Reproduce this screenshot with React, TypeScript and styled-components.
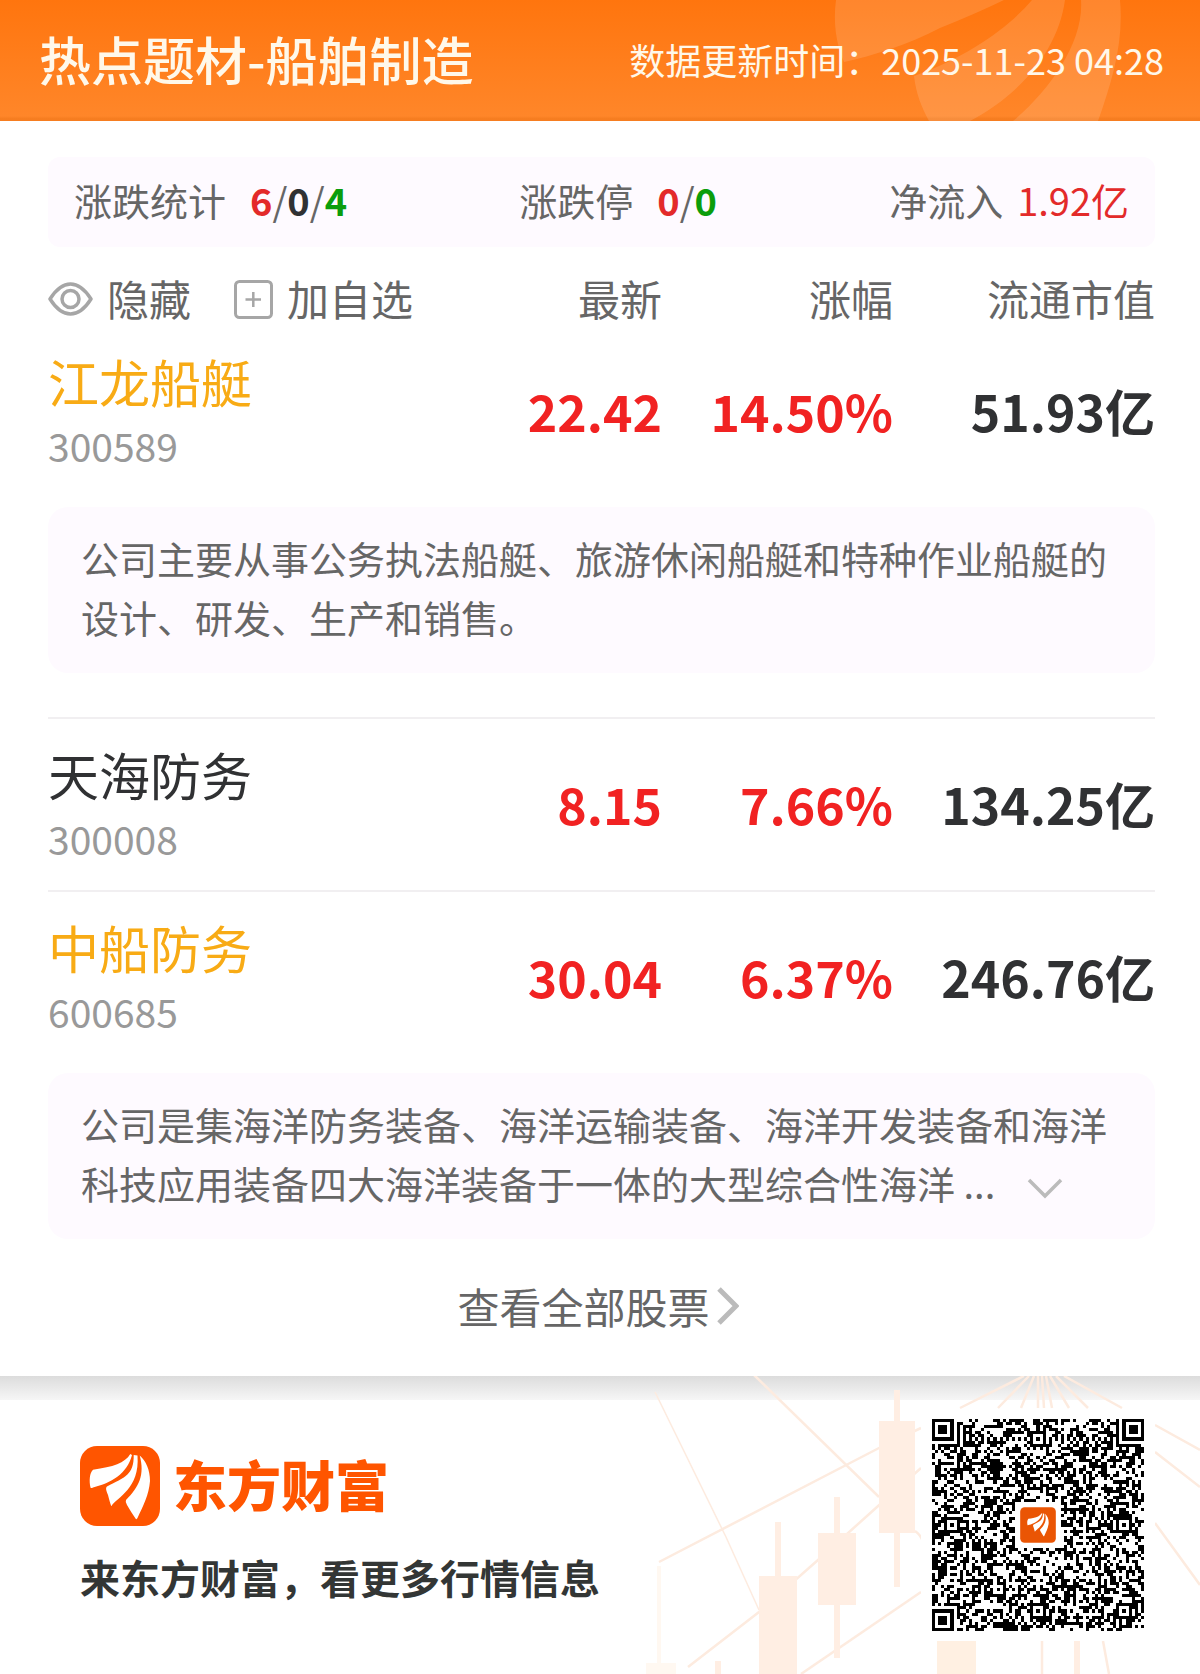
import React, { useState } from "react";
import styled, { createGlobalStyle } from "styled-components";

const GlobalStyle = createGlobalStyle`
  *, *::before, *::after { box-sizing: border-box; }
  body {
    margin: 0;
    background: #fff;
    color: #303133;
    font-family: "Noto Sans CJK SC", "Noto Sans", sans-serif;
  }
  button, table { font: inherit; }
  h1, p { margin: 0; }
`;

const RED = "#f12222";
const GREEN = "#0b9d0b";
const BRAND = "#ff5500";

/* ---------- Header ---------- */

const Header = styled.header`
  position: relative;
  display: flex;
  align-items: center;
  justify-content: space-between;
  gap: 24px;
  height: 121px;
  padding: 0 36px 4px 39px;
  overflow: hidden;
  background: linear-gradient(#ff750e, #ff8629 96%, #f67d20 98%);
  color: #fff8ea;
`;

const HeaderMark = styled.svg`
  position: absolute;
  top: 0;
  right: 0;
  width: 390px;
  height: 121px;
`;

const Title = styled.h1`
  position: relative;
  font-size: 52px;
  line-height: 64px;
  font-weight: 500;
  white-space: nowrap;
`;

const Updated = styled.p`
  position: relative;
  font-size: 36px;
  line-height: 48px;
  white-space: nowrap;
`;

/* ---------- Summary strip ---------- */

const Main = styled.main`
  padding: 36px 45px 0 48px;
`;

const Summary = styled.section`
  display: flex;
  align-items: center;
  justify-content: space-between;
  height: 90px;
  padding: 0 26px 4px;
  border-radius: 12px;
  background: #fefaff;
`;

const Stat = styled.p<{ $gap: number }>`
  display: flex;
  gap: ${(p) => p.$gap}px;
  font-size: 38px;
  line-height: 56px;
  color: #666;
  white-space: nowrap;
`;

const Count = styled.b<{ $color: string }>`
  font-weight: 700;
  color: ${(p) => p.$color};
`;

const Inflow = styled.span`
  color: #e32a2a;
`;

/* ---------- Stock table ---------- */

const Table = styled.table`
  width: 100%;
  table-layout: fixed;
  border-collapse: separate;
  border-spacing: 0;
`;

const Col = styled.col<{ $width?: number }>`
  width: ${(p) => (p.$width ? `${p.$width}px` : "auto")};
`;

const HeadCell = styled.th`
  height: 78px;
  padding: 23px 0 0;
  font-size: 42px;
  line-height: 55px;
  font-weight: 400;
  color: #666;
  text-align: right;
  vertical-align: top;
  white-space: nowrap;
`;

const Tools = styled.div`
  display: flex;
  align-items: center;
  gap: 43px;
`;

const ToolButton = styled.button`
  display: flex;
  align-items: center;
  gap: 14px;
  padding: 0;
  border: 0;
  background: none;
  color: #666;
  line-height: 55px;
  white-space: nowrap;
  cursor: pointer;

  svg {
    flex: none;
    margin-top: 3px;
  }
`;

const NameCell = styled.th<{ $ruled: boolean }>`
  height: ${(p) => (p.$ruled ? 173 : 172)}px;
  padding: ${(p) => (p.$ruled ? 23 : 24)}px 0 16px;
  border-top: ${(p) => (p.$ruled ? "2px solid #f1eff1" : "0")};
  text-align: left;
  vertical-align: top;
  font-weight: 400;
`;

const StockName = styled.div<{ $held: boolean }>`
  font-size: 51px;
  line-height: 64px;
  color: ${(p) => (p.$held ? "#f8ab15" : "#303133")};
`;

const StockCode = styled.div`
  font-size: 39px;
  line-height: 64px;
  color: #999;
`;

const NumberCell = styled.td<{ $ruled: boolean; $color: string }>`
  padding: 0 0 3px;
  border-top: ${(p) => (p.$ruled ? "2px solid #f1eff1" : "0")};
  font-size: 50px;
  line-height: 64px;
  font-weight: 700;
  text-align: right;
  vertical-align: middle;
  color: ${(p) => p.$color};
  white-space: nowrap;
`;

const NoteCell = styled.td<{ $last: boolean }>`
  padding: 10px 0 ${(p) => (p.$last ? 34 : 44)}px;
`;

const Note = styled.div`
  padding: 21px 32px 27px 33px;
  border-radius: 20px;
  background: #fefaff;
  font-size: 38px;
  line-height: 59px;
  color: #666;
`;

const MoreButton = styled.button`
  margin-left: 32px;
  padding: 0;
  border: 0;
  background: none;
  line-height: 0;
  cursor: pointer;
`;

const AllLink = styled.a`
  display: flex;
  align-items: center;
  justify-content: center;
  gap: 7px;
  height: 103px;
  padding: 0 7px 37px 0;
  font-size: 42px;
  line-height: 64px;
  color: #666;
  text-decoration: none;
`;

/* ---------- Footer ---------- */

const Footer = styled.footer`
  position: relative;
  display: flex;
  justify-content: space-between;
  align-items: flex-start;
  height: 298px;
  padding: 33px 45px 0 80px;
  overflow: hidden;
  background: linear-gradient(#dcdcdc, #f6f6f6 24px, #fff 24px);
`;

const ChartBackdrop = styled.svg`
  position: absolute;
  top: 0;
  right: 0;
  width: 560px;
  height: 298px;
`;

const Brand = styled.div`
  position: relative;
  display: flex;
  flex-direction: column;
  gap: 23px;
  padding-top: 37px;
`;

const BrandRow = styled.div`
  display: flex;
  align-items: center;
  gap: 13px;
  height: 80px;
`;

const WordMark = styled.span`
  padding-bottom: 4px;
  font-size: 54px;
  line-height: 64px;
  font-weight: 900;
  color: ${BRAND};
`;

const Slogan = styled.p`
  font-size: 40px;
  line-height: 56px;
  font-weight: 700;
  color: #333635;
`;

const QrCard = styled.div`
  position: relative;
  padding: 10px 11px;
  background: #fff;
  line-height: 0;
`;

/* ---------- Drawings ---------- */

const Petals = () => (
  <>
    <path d="M50.3 8C45 17 33 21 13 23.7C9.5 27 9 35 10.5 41.5Q11 42.5 13 41.5C31 37 47 28 52 9Z" />
    <path d="M53.7 9C54 29 45 31 27 40.5C25.500 42 26 44 28 49Q30 57 31.300 60.300C37 51 60 43 57.500 9.500Z" />
    <path d="M59.700 9.500C65 29 59 41 46 54Q45 56 47 59Q51 66 55.500 72.500Q56.500 74 57.500 72C63 60 69 49 70 35C70 24 66 15 59.700 9.500Z" />
  </>
);

const Logo = ({ size, color }: { size: number; color: string }) => (
  <svg width={size} height={size} viewBox="0 0 80 80" aria-hidden="true">
    <rect width="80" height="80" rx="17" fill={color} />
    <g fill="#fff"><Petals /></g>
  </svg>
);

const EyeIcon = () => (
  <svg width="45" height="34" viewBox="0 0 45 34" fill="none" stroke="#a6a6a6" strokeWidth="3.500" aria-hidden="true">
    <path d="M2 17C9 6 15.500 2 22.500 2S36 6 43 17C36 28 29.500 32 22.500 32S9 28 2 17Z" strokeLinejoin="round" />
    <circle cx="22.500" cy="17" r="8.500" />
  </svg>
);

const PlusBoxIcon = () => (
  <svg width="39" height="39" viewBox="0 0 39 39" fill="none" stroke="#a6a6a6" strokeWidth="3" aria-hidden="true">
    <rect x="1.500" y="1.500" width="36" height="36" rx="4" />
    <path d="M11.500 19.500H27M19.300 12V27" strokeWidth="2.500" />
  </svg>
);

const QR_SIZE = 69;
const ALIGN = [6, 34, 62];

function buildQr(): string {
  let seed = 20251123;
  const next = () => {
    seed = (seed * 1103515245 + 12345) % 2147483648;
    return seed / 2147483648;
  };
  const ring = (dx: number, dy: number) => Math.max(Math.abs(dx), Math.abs(dy));
  let d = "";
  for (let y = 0; y < QR_SIZE; y++) {
    for (let x = 0; x < QR_SIZE; x++) {
      let dark = next() < 0.5;
      if (x === 6 || y === 6) dark = (x + y) % 2 === 0;
      for (const ay of ALIGN) {
        for (const ax of ALIGN) {
          const r = ring(x - ax, y - ay);
          if (r <= 2) dark = r !== 1;
        }
      }
      for (const [fx, fy] of [[3, 3], [65, 3], [3, 65]]) {
        const r = ring(x - fx, y - fy);
        if (r <= 4) dark = r === 3 || r <= 1;
      }
      if (ring(x - 34, y - 34) <= 7) dark = false;
      if (dark) d += `M${x} ${y}h1v1h-1z`;
    }
  }
  return d;
}

const QR_PATH = buildQr();

const QrCode = () => (
  <svg width="212" height="212" viewBox="0 0 69 69" role="img" aria-label="二维码">
    <path d={QR_PATH} shapeRendering="crispEdges" />
    <g transform="translate(28.700 28.700) scale(0.145)">
      <rect width="80" height="80" rx="10" fill="#ea5504" />
      <g fill="#fff" transform="translate(8 7) scale(0.800)"><Petals /></g>
    </g>
  </svg>
);

const Backdrop = () => (
  <ChartBackdrop viewBox="640 1376 560 298" aria-hidden="true">
    <g fill="none" stroke="#fdebdf" strokeWidth="2.500">
      <path d="M659 1562L879 1448L921 1428" />
      <path d="M753 1374L879 1497" />
      <path d="M915 1531Q921 1535 923 1542" />
      <path d="M655 1392L726 1537L759 1610" strokeWidth="1.500" />
      <path d="M688 1667L759 1612L818 1560L877 1507L921 1468" />
      <path d="M801 1674L921 1592" />
      <path d="M1155 1425L1200 1450M1155 1452L1200 1487M1155 1523L1200 1585" />
      <path d="M1024 1376L960 1408M1029 1376L998 1408M1034 1376L1021 1408M1038 1376V1408M1042 1376L1044 1408M1046 1376L1052 1408M1050 1376L1069 1408M1056 1376L1088 1408M1064 1376L1122 1408" />
      <path d="M1042 1641V1674M1103 1641L1109 1674" />
    </g>
    <g fill="#ffeee3">
      <path d="M759 1576H797V1674H759ZM775 1522H781V1576H775Z" />
      <path d="M818 1533H856V1605H818ZM834 1497H840V1533H834ZM834 1605H840V1658H834Z" />
      <path d="M879 1421H915V1533H879ZM894 1390H900V1421H894ZM894 1533H900V1587H894Z" />
      <path d="M715 1661H721V1674H715ZM1074 1641H1080V1674H1074Z" />
    </g>
    <path d="M937 1641H976V1674H937Z" fill="#fff0e2" />
    <path d="M646 1663H676V1674H646ZM657 1566H661V1663H657Z" fill="#fff8f1" />
  </ChartBackdrop>
);

/* ---------- Data ---------- */

interface Stock {
  name: string;
  code: string;
  price: string;
  change: string;
  cap: string;
  held: boolean;
  note?: string;
  clipped?: boolean;
}

const STOCKS: Stock[] = [
  {
    name: "江龙船艇", code: "300589", price: "22.42", change: "14.50%", cap: "51.93亿", held: true,
    note: "公司主要从事公务执法船艇、旅游休闲船艇和特种作业船艇的设计、研发、生产和销售。",
  },
  { name: "天海防务", code: "300008", price: "8.15", change: "7.66%", cap: "134.25亿", held: false },
  {
    name: "中船防务", code: "600685", price: "30.04", change: "6.37%", cap: "246.76亿", held: true,
    note: "公司是集海洋防务装备、海洋运输装备、海洋开发装备和海洋科技应用装备四大海洋装备于一体的大型综合性海洋 ...",
    clipped: true,
  },
];

const StockRows = ({ stock, index }: { stock: Stock; index: number }) => {
  const ruled = index > 0;
  return (
    <>
      <tr>
        <NameCell scope="row" $ruled={ruled}>
          <StockName $held={stock.held}>{stock.name}</StockName>
          <StockCode>{stock.code}</StockCode>
        </NameCell>
        <NumberCell $ruled={ruled} $color={RED}>{stock.price}</NumberCell>
        <NumberCell $ruled={ruled} $color={RED}>{stock.change}</NumberCell>
        <NumberCell $ruled={ruled} $color="#303133">{stock.cap}</NumberCell>
      </tr>
      {stock.note && (
        <tr>
          <NoteCell colSpan={4} $last={index === STOCKS.length - 1}>
            <Note>
              {stock.note}
              {stock.clipped && (
                <MoreButton type="button" aria-label="展开">
                  <svg width="36" height="21" viewBox="0 0 36 21" fill="none" stroke="#bbb" strokeWidth="3.500">
                    <path d="M2 2L18 18L34 2" />
                  </svg>
                </MoreButton>
              )}
            </Note>
          </NoteCell>
        </tr>
      )}
    </>
  );
};

export default function App() {
  const [hidden, setHidden] = useState(false);
  return (
    <>
      <GlobalStyle />
      <Header>
        <HeaderMark viewBox="0 0 390 121" aria-hidden="true">
          <g fill="#fff" fillOpacity="0.13">
            <path d="M26 0C23 22 26 44 34 62C62 56 100 44 130 28Q165 14 194 0Z" />
            <path d="M104 76C106 94 112 108 119 121H160C208 96 248 52 255 0H222C200 26 160 56 104 76Z" />
            <path d="M271 0C274 42 240 90 203 121H288C302 82 314 42 310 0Z" />
          </g>
        </HeaderMark>
        <Title>热点题材-船舶制造</Title>
        <Updated>数据更新时间：2025-11-23 04:28</Updated>
      </Header>
      <Main>
        <Summary>
          <Stat $gap={24}>
            <span>涨跌统计</span>
            <span><Count $color="#e32a2a">6</Count>/<Count $color="#303133">0</Count>/<Count $color={GREEN}>4</Count></span>
          </Stat>
          <Stat $gap={24}>
            <span>涨跌停</span>
            <span><Count $color="#e32a2a">0</Count>/<Count $color={GREEN}>0</Count></span>
          </Stat>
          <Stat $gap={14}>
            <span>净流入</span>
            <Inflow>1.92亿</Inflow>
          </Stat>
        </Summary>
        <Table>
          <colgroup>
            <Col />
            <Col $width={200} />
            <Col $width={231} />
            <Col $width={262} />
          </colgroup>
          <thead>
            <tr>
              <HeadCell scope="col">
                <Tools>
                  <ToolButton type="button" aria-pressed={hidden} onClick={() => setHidden(!hidden)}>
                    <EyeIcon />隐藏
                  </ToolButton>
                  <ToolButton type="button">
                    <PlusBoxIcon />加自选
                  </ToolButton>
                </Tools>
              </HeadCell>
              <HeadCell scope="col">最新</HeadCell>
              <HeadCell scope="col">涨幅</HeadCell>
              <HeadCell scope="col">流通市值</HeadCell>
            </tr>
          </thead>
          <tbody>
            {STOCKS.map((stock, i) => (
              <StockRows key={stock.code} stock={stock} index={i} />
            ))}
          </tbody>
        </Table>
        <AllLink href="#all">
          查看全部股票
          <svg width="22" height="38" viewBox="0 0 22 38" fill="none" stroke="#bbb" strokeWidth="5" aria-hidden="true">
            <path d="M2 2L19 19L2 36" />
          </svg>
        </AllLink>
      </Main>
      <Footer>
        <Backdrop />
        <Brand>
          <BrandRow>
            <Logo size={80} color={BRAND} />
            <WordMark>东方财富</WordMark>
          </BrandRow>
          <Slogan>来东方财富，看更多行情信息</Slogan>
        </Brand>
        <QrCard><QrCode /></QrCard>
      </Footer>
    </>
  );
}
